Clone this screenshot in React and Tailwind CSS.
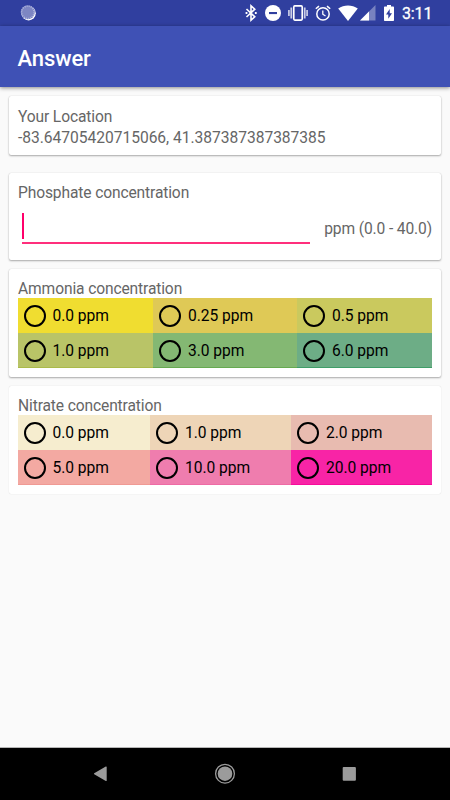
import { useState } from "react";

const AMMONIA = [
  { label: "0.0 ppm", color: "bg-[#f0dd30]" },
  { label: "0.25 ppm", color: "bg-[#dfc956]" },
  { label: "0.5 ppm", color: "bg-[#cac95e]" },
  { label: "1.0 ppm", color: "bg-[#b9c467] shadow-[inset_0_-1px_0_#aaba4a]" },
  { label: "3.0 ppm", color: "bg-[#84b873] shadow-[inset_0_-1px_0_#66aa50]" },
  { label: "6.0 ppm", color: "bg-[#6dad86] shadow-[inset_0_-1px_0_#3f9e68]" },
];

const NITRATE = [
  { label: "0.0 ppm", color: "bg-[#f6edcf]" },
  { label: "1.0 ppm", color: "bg-[#eed5b7]" },
  { label: "2.0 ppm", color: "bg-[#e8bbb0]" },
  { label: "5.0 ppm", color: "bg-[#f3a9a2] shadow-[inset_0_-1px_0_#f09a94]" },
  { label: "10.0 ppm", color: "bg-[#ef7dae] shadow-[inset_0_-1px_0_#ee6ba5]" },
  { label: "20.0 ppm", color: "bg-[#f824a6] shadow-[inset_0_-1px_0_#f80c9c]" },
];

function StatusBar() {
  return (
    <div className="flex h-[26px] items-center bg-[#303f9f] pr-[18px] pl-[20px] text-white">
      <svg className="h-4 w-4" viewBox="0 0 16 16">
        <circle cx="8.6" cy="8.2" r="7.2" fill="#fff" />
        <circle cx="7.8" cy="7.3" r="7" fill="#7d86c3" />
        <circle cx="7.8" cy="7.3" r="6.2" fill="none" stroke="#b3b9e0" strokeWidth="1.4" strokeDasharray="1 1.1" />
      </svg>

      <div className="ml-auto flex items-center">
        {/* Bluetooth */}
        <svg className="h-[18px] w-3" viewBox="0 0 12 18" fill="none" stroke="currentColor" strokeWidth="1.6">
          <path d="M1.5 5L9.8 12.8 6 16.2V1.8l3.8 3.4L1.5 13" />
          <path d="M.6 8.1h1.8v1.8H.6zM9.9 8.1h1.8v1.8H9.9z" fill="currentColor" stroke="none" />
        </svg>

        {/* Do not disturb */}
        <svg className="ml-2 h-4 w-4" viewBox="0 0 16 16">
          <circle cx="8" cy="8" r="8" fill="currentColor" />
          <path d="M4 7h8v2.1H4z" fill="#303f9f" />
        </svg>

        {/* Vibrate */}
        <svg className="ml-[7px] h-4 w-5" viewBox="0 0 20 16" fill="none" stroke="currentColor">
          <rect x="5.8" y="0.9" width="8.4" height="14.2" rx="1" strokeWidth="1.6" />
          <path d="M3.3 2.5v11M16.7 2.5v11" strokeWidth="1.8" opacity=".75" />
          <path d="M.9 5v6M19.1 5v6" strokeWidth="1.8" opacity=".7" />
        </svg>

        {/* Alarm */}
        <svg className="ml-[7px] h-4 w-4" viewBox="0 0 16 16" fill="none" stroke="currentColor" strokeWidth="1.5">
          <circle cx="8" cy="8.9" r="6.2" />
          <path d="M7.8 5.4v3.8l2.7 1.8" strokeWidth="1.3" />
          <path d="M.8 3.8L4 1.1M15.2 3.8L12 1.1" />
        </svg>

        {/* Wifi */}
        <svg className="ml-[7px] h-4 w-5" viewBox="0 0 20 16" fill="currentColor">
          <path d="M10 16L.2 3.4C6-.5 14-.5 19.8 3.4z" />
        </svg>

        {/* Signal */}
        <svg className="ml-[2px] h-4 w-4" viewBox="0 0 16 16" fill="currentColor">
          <path d="M0 15.5L15.5 0v15.5z" opacity=".35" />
          <path d="M0 15.5L9 6.5v9z" />
        </svg>

        {/* Battery */}
        <svg className="ml-[8px] h-4 w-[10px]" viewBox="0 0 10 16">
          <path d="M3 0h4v1.6h2c.6 0 1 .4 1 1V15c0 .6-.4 1-1 1H1c-.6 0-1-.4-1-1V2.6c0-.6.4-1 1-1h2z" fill="currentColor" />
          <path d="M5.7 4L2 9.5h2.3v4.2L8 8.2H5.7z" fill="#303f9f" />
        </svg>

        <span className="ml-[8px] w-[30px] pt-[2px] text-[16px] leading-[24px] whitespace-nowrap [-webkit-text-stroke:0.3px_white]">
          3:11
        </span>
      </div>
    </div>
  );
}

function Card({ className, children }) {
  return (
    <section className={`mx-[9px] rounded-[2px] bg-white px-[9px] ${className}`}>
      {children}
    </section>
  );
}

function Choices({ options, columns, name, value, onChange }) {
  return (
    <div className={`-ml-[0.5px] grid ${columns}`}>
      {options.map((option) => (
        <label
          key={option.label}
          className={`flex h-[35px] items-center pl-[6px] text-[15.6px] text-black ${option.color}`}
        >
          <input
            type="radio"
            name={name}
            checked={value === option.label}
            onChange={() => onChange(option.label)}
            className="h-[22px] w-[22px] appearance-none rounded-full border-2 border-black checked:bg-black"
          />
          <span className="ml-[7px] pt-[2px] tracking-[-0.05px]">{option.label}</span>
        </label>
      ))}
    </div>
  );
}

function NavBar() {
  return (
    <nav className="flex h-[53px] items-center justify-between border-t border-[#b5b5b5] bg-black pr-[90px] pl-[89px] text-[#9b9b9b]">
      <button type="button" aria-label="Back">
        <svg className="h-[22px] w-[22px]" viewBox="0 0 22 22" fill="currentColor">
          <path d="M17.7 4v13.5c0 .5-.5.7-.9.4L5.2 11.3c-.4-.3-.4-.7 0-1L16.8 3.6c.4-.3.9-.1.9.4z" />
        </svg>
      </button>
      <button type="button" aria-label="Home">
        <svg className="h-[22px] w-[22px]" viewBox="0 0 22 22">
          <circle cx="11" cy="10.7" r="9.4" fill="none" stroke="currentColor" strokeWidth="1.3" />
          <circle cx="11" cy="10.7" r="7.3" fill="currentColor" />
        </svg>
      </button>
      <button type="button" aria-label="Recents">
        <svg className="h-[22px] w-[22px]" viewBox="0 0 22 22" fill="currentColor">
          <rect x="4.7" y="4" width="13.2" height="13.8" rx="1" />
        </svg>
      </button>
    </nav>
  );
}

function App() {
  const [phosphate, setPhosphate] = useState("");
  const [ammonia, setAmmonia] = useState("");
  const [nitrate, setNitrate] = useState("");

  return (
    <div className="flex h-[800px] w-[450px] flex-col overflow-hidden bg-[#fafafa] font-['Roboto',sans-serif] text-[15.6px] tracking-[-0.13px] text-[#666666]">
      <StatusBar />

      {/* Toolbar */}
      <header className="z-10 flex h-[61px] items-center bg-[#3f51b5] pt-[3px] pl-[17.5px] shadow-[0_1px_4px_rgba(0,0,0,0.45)]">
        <h1 className="text-[22px] font-medium tracking-[-0.1px] text-white">Answer</h1>
      </header>

      <main className="flex-1 pt-[9px]">
        <Card className="h-[59px] pt-[11px] leading-[20.5px] shadow-[0_1px_2px_rgba(0,0,0,0.32),0_0_1px_rgba(0,0,0,0.18)]">
          <p>Your Location</p>
          <p className="tracking-[-0.03px]">-83.64705420715066, 41.387387387387385</p>
        </Card>

        <Card className="mt-[18px] h-[87px] pt-[9px] leading-[21px] shadow-[0_1px_2px_rgba(0,0,0,0.32),0_0_1px_rgba(0,0,0,0.18)]">
          <p className="h-[21px] leading-[22px]">Phosphate concentration</p>
          <div className="flex items-start pl-[4px]">
            <div className="mt-[10px] flex h-[31px] w-[288px] border-b-2 border-[#ff2f7c]">
              <span className="h-[26px] w-[2px] bg-[#ff006a]" />
              <input
                value={phosphate}
                onChange={(e) => setPhosphate(e.target.value)}
                className="h-[26px] min-w-0 flex-1 bg-transparent outline-none"
              />
            </div>
            <span className="mt-[16px] ml-auto whitespace-nowrap">ppm (0.0 - 40.0)</span>
          </div>
        </Card>

        <Card className="mt-[9px] h-[108px] pt-[8px] shadow-[0_1px_2px_rgba(0,0,0,0.32),0_0_1px_rgba(0,0,0,0.18)]">
          <p className="h-[21px] leading-[24px]">Ammonia concentration</p>
          <Choices
            options={AMMONIA}
            columns="grid-cols-[135.5px_144px_135px]"
            name="ammonia"
            value={ammonia}
            onChange={setAmmonia}
          />
        </Card>

        <Card className="mt-[9px] h-[108px] pt-[8px] shadow-[0_0_1px_rgba(0,0,0,0.2)]">
          <p className="h-[21px] leading-[24px]">Nitrate concentration</p>
          <Choices
            options={NITRATE}
            columns="grid-cols-[132.5px_141px_141px]"
            name="nitrate"
            value={nitrate}
            onChange={setNitrate}
          />
        </Card>
      </main>

      <NavBar />
    </div>
  );
}

export default App;
